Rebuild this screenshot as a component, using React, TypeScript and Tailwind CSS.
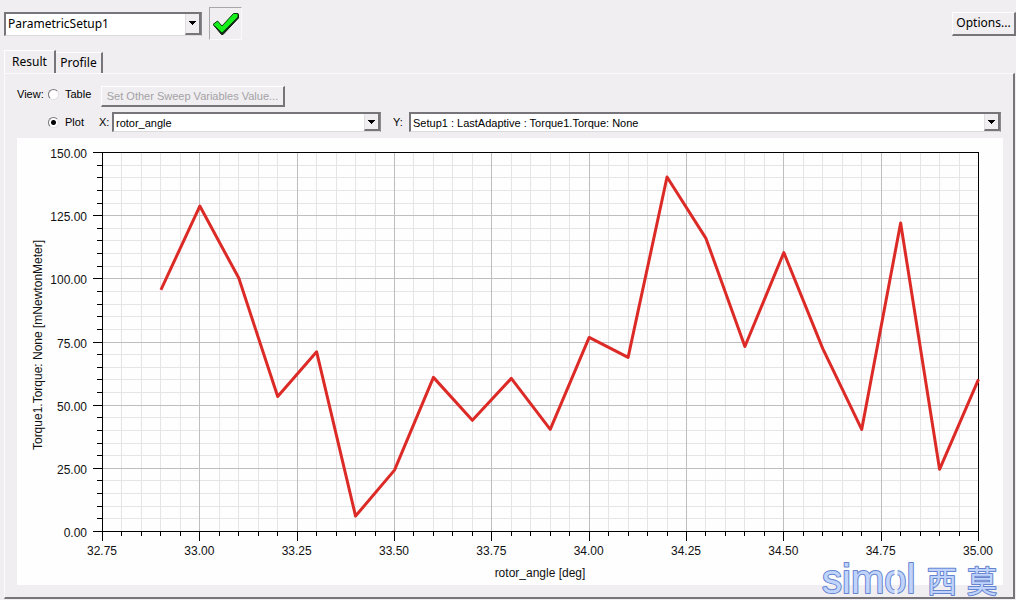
import React, { useState } from "react";
import clsx from "clsx";

interface DataPoint {
  angle: number;
  torque: number;
}

const DATA: DataPoint[] = [
  { angle: 32.9, torque: 95.6 },
  { angle: 33.0, torque: 128.8 },
  { angle: 33.1, torque: 100.3 },
  { angle: 33.2, torque: 53.4 },
  { angle: 33.3, torque: 71.1 },
  { angle: 33.4, torque: 6.1 },
  { angle: 33.5, torque: 24.3 },
  { angle: 33.6, torque: 61.0 },
  { angle: 33.7, torque: 44.0 },
  { angle: 33.8, torque: 60.6 },
  { angle: 33.9, torque: 40.4 },
  { angle: 34.0, torque: 76.8 },
  { angle: 34.1, torque: 68.9 },
  { angle: 34.2, torque: 140.3 },
  { angle: 34.3, torque: 116.0 },
  { angle: 34.4, torque: 73.2 },
  { angle: 34.5, torque: 110.4 },
  { angle: 34.6, torque: 72.4 },
  { angle: 34.7, torque: 40.4 },
  { angle: 34.8, torque: 122.1 },
  { angle: 34.9, torque: 24.6 },
  { angle: 35.0, torque: 60.2 },
];

// Plot area inside the 986x447 chart
const LEFT = 85;
const RIGHT = 961;
const TOP = 14;
const BOTTOM = 393;

const X_MIN = 32.75;
const X_MAX = 35;
const Y_MAX = 150;

const toX = (v: number) => LEFT + ((v - X_MIN) / (X_MAX - X_MIN)) * (RIGHT - LEFT);
const toY = (v: number) => BOTTOM - (v / Y_MAX) * (BOTTOM - TOP);
const snap = (v: number) => Math.round(v) + 0.5;

// every fifth tick is a major one
const X_TICKS = Array.from({ length: 46 }, (_, i) => X_MIN + i * 0.05);
const Y_TICKS = Array.from({ length: 31 }, (_, i) => i * 5);

function TorqueChart(): React.ReactElement {
  const points = DATA.map((p) => `${toX(p.angle) + 0.5},${toY(p.torque) + 0.5}`).join(" ");

  return (
    <svg
      viewBox="0 0 986 447"
      className="block w-full bg-[#fefefe] font-['Liberation_Sans',sans-serif] text-[12px]"
      role="img"
      aria-label="Torque against rotor angle"
    >
      {/* Grid, minor lines first */}
      <g strokeWidth={1} shapeRendering="crispEdges">
        {[false, true].map((major) => (
          <g key={String(major)} stroke={major ? "#bfbdc0" : "#e6e4e7"}>
            {X_TICKS.map((v, i) =>
              (i % 5 === 0) === major ? (
                <line key={i} x1={snap(toX(v))} x2={snap(toX(v))} y1={TOP} y2={BOTTOM} />
              ) : null
            )}
            {Y_TICKS.map((v, i) =>
              (i % 5 === 0) === major ? (
                <line key={i} x1={LEFT} x2={RIGHT} y1={snap(toY(v))} y2={snap(toY(v))} />
              ) : null
            )}
          </g>
        ))}
      </g>

      {/* Frame and ticks */}
      <g stroke="#000" strokeWidth={1} fill="none" shapeRendering="crispEdges">
        <rect x={LEFT + 0.5} y={TOP + 0.5} width={RIGHT - LEFT} height={BOTTOM - TOP} />
        {X_TICKS.map((v, i) => (
          <line
            key={i}
            x1={snap(toX(v))}
            x2={snap(toX(v))}
            y1={BOTTOM}
            y2={BOTTOM + (i % 5 === 0 ? 10 : 5)}
          />
        ))}
        {Y_TICKS.map((v, i) => (
          <line
            key={i}
            x1={LEFT - (i % 5 === 0 ? 9 : 5)}
            x2={LEFT}
            y1={snap(toY(v))}
            y2={snap(toY(v))}
          />
        ))}
      </g>

      {/* Labels */}
      <g fill="#111">
        {X_TICKS.filter((_, i) => i % 5 === 0).map((v) => (
          <text key={v} x={toX(v)} y={417} textAnchor="middle">
            {v.toFixed(2)}
          </text>
        ))}
        {Y_TICKS.filter((_, i) => i % 5 === 0).map((v) => (
          <text key={v} x={70} y={toY(v) + 6} textAnchor="end">
            {v.toFixed(2)}
          </text>
        ))}
        <text x={523} y={439} textAnchor="middle">
          rotor_angle [deg]
        </text>
        <text transform="translate(25 207) rotate(-90)" textAnchor="middle">
          Torque1.Torque: None [mNewtonMeter]
        </text>
      </g>

      <polyline points={points} fill="none" stroke="#dc2a26" strokeWidth={3} strokeLinejoin="round" />
    </svg>
  );
}

interface DropdownProps {
  id: string;
  label: string;
  value: string;
  className?: string;
}

function Dropdown({ id, label, value, className }: DropdownProps): React.ReactElement {
  return (
    <div
      className={clsx(
        "relative border-t-2 border-l-2 border-r border-b border-t-[#77757a] border-l-[#77757a] border-r-[#8a888c] border-b-[#dcdadd] bg-white",
        className
      )}
    >
      <select
        id={id}
        aria-label={label}
        className="block h-full w-full appearance-none bg-transparent pl-[2px] pr-5 text-black outline-none"
      >
        <option>{value}</option>
      </select>
      <span className="pointer-events-none absolute inset-y-0 right-0 flex w-4 items-center justify-center border-r-2 border-b-2 border-l border-[#77757a] border-l-[#e0dee1] bg-[#f0eef0]">
        <svg width="7" height="4" viewBox="0 0 7 4" shapeRendering="crispEdges">
          <path d="M0 0h7L3.5 4z" fill="#000" />
        </svg>
      </span>
    </div>
  );
}

interface ViewRadioProps {
  label: string;
  checked: boolean;
  onChange: () => void;
}

function ViewRadio({ label, checked, onChange }: ViewRadioProps): React.ReactElement {
  return (
    <label className="flex w-[51px] items-center gap-[6px]">
      <input
        type="radio"
        name="view"
        checked={checked}
        onChange={onChange}
        className="size-[11px] shrink-0 appearance-none rounded-full border border-t-[#77757a] border-l-[#77757a] border-r-[#e2e0e3] border-b-[#e2e0e3] bg-white checked:bg-[radial-gradient(circle,#000_2px,#fff_3px)]"
      />
      {label}
    </label>
  );
}

function Watermark(): React.ReactElement {
  return (
    <svg
      width="180"
      height="40"
      viewBox="0 0 180 40"
      className="pointer-events-none absolute right-[12px] bottom-0 overflow-visible"
      fill="#c0d4fb"
      stroke="#6684cf"
      strokeWidth={2}
      strokeLinejoin="round"
    >
      <text x={1} y={36} paintOrder="stroke" className="font-['Liberation_Sans',sans-serif] text-[40px]">
        simol
      </text>
      {/* the o is split at top and bottom */}
      <path d="M75 12v6" stroke="#fefefe" strokeWidth={3} />
      <path d="M75 31v6" stroke="#f0eef0" strokeWidth={3} />
      <g paintOrder="stroke" className="font-['Noto_Sans_CJK_SC',sans-serif] text-[30px]">
        <text x={106} y={35}>西</text>
        <text x={146} y={35}>莫</text>
      </g>
    </svg>
  );
}

export default function App(): React.ReactElement {
  const [view, setView] = useState<"table" | "plot">("plot");

  return (
    <div className="flex min-h-screen flex-col bg-[#f0eef0] pb-px font-['Liberation_Sans',sans-serif] text-[11px] leading-4 text-black">
      {/* Setup bar */}
      <header className="flex items-center pt-[7px] pl-1 font-['Noto_Sans',sans-serif] text-[12px]">
        <Dropdown id="setup" label="Setup" value="ParametricSetup1" className="h-6 w-[198px]" />
        <button
          type="button"
          aria-label="Apply"
          className="ml-[7px] flex size-[33px] items-center justify-center border border-t-[#a9a7ab] border-l-[#a9a7ab] border-r-[#fafafa] border-b-[#fafafa]"
        >
          <svg width="28" height="24" viewBox="0 0 28 24">
            <path d="M2 13.5l3.500-2.500 5 5L23 2.500h3.500V6L11 22.500H9.500z" fill="#0b3b10" stroke="#111" strokeWidth={1} />
            <path d="M1 12.500l4.500-3.500 4.500 5L21.500 1.500H26v3.500L10 21z" fill="#16ef1c" stroke="#0b3b10" strokeWidth={1} />
          </svg>
        </button>
        <button
          type="button"
          className="ml-auto h-6 w-16 border-t border-l border-r-2 border-b-2 border-t-white border-l-white border-r-[#77757a] border-b-[#77757a]"
        >
          Options...
        </button>
      </header>

      {/* Tabs */}
      <div role="tablist" className="mt-[10px] flex h-[23px] items-end pl-1 font-['Noto_Sans',sans-serif] text-[12px]">
        <button
          type="button"
          role="tab"
          aria-selected="true"
          className="h-[23px] w-[52px] border-t border-l border-r-2 border-t-white border-l-white border-r-[#77757a]"
        >
          Result
        </button>
        <button
          type="button"
          role="tab"
          aria-selected="false"
          className="h-[21px] w-[47px] border-t border-r-2 border-t-white border-r-[#77757a]"
        >
          Profile
        </button>
      </div>

      <main className="relative mr-px ml-1 grow border-t border-l border-r-2 border-b-2 border-t-[#fbfafb] border-l-[#fbfafb] border-r-[#77757a] border-b-[#77757a] pt-3 pr-[10px] pb-[11px] pl-3">
        <div className="flex h-[21px] items-start">
          <span className="w-[31px]">View:</span>
          <ViewRadio label="Table" checked={view === "table"} onChange={() => setView("table")} />
          <button
            type="button"
            disabled
            className="ml-[2px] h-[21px] w-[184px] border-t border-l border-r-2 border-b-2 border-t-white border-l-white border-r-[#77757a] border-b-[#77757a] text-[#a3a1a6]"
          >
            Set Other Sweep Variables Value...
          </button>
        </div>

        <div className="mt-[5px] flex h-5 items-center pl-[31px]">
          <ViewRadio label="Plot" checked={view === "plot"} onChange={() => setView("plot")} />
          <label htmlFor="x-axis" className="w-[13px]">
            X:
          </label>
          <Dropdown id="x-axis" label="X" value="rotor_angle" className="h-5 w-[269px]" />
          <label htmlFor="y-axis" className="ml-3 w-4">
            Y:
          </label>
          <Dropdown
            id="y-axis"
            label="Y"
            value="Setup1 : LastAdaptive : Torque1.Torque: None"
            className="mr-[2px] h-5 grow"
          />
        </div>

        <div className="mt-[6px]">
          <TorqueChart />
        </div>
        <Watermark />
      </main>
    </div>
  );
}
